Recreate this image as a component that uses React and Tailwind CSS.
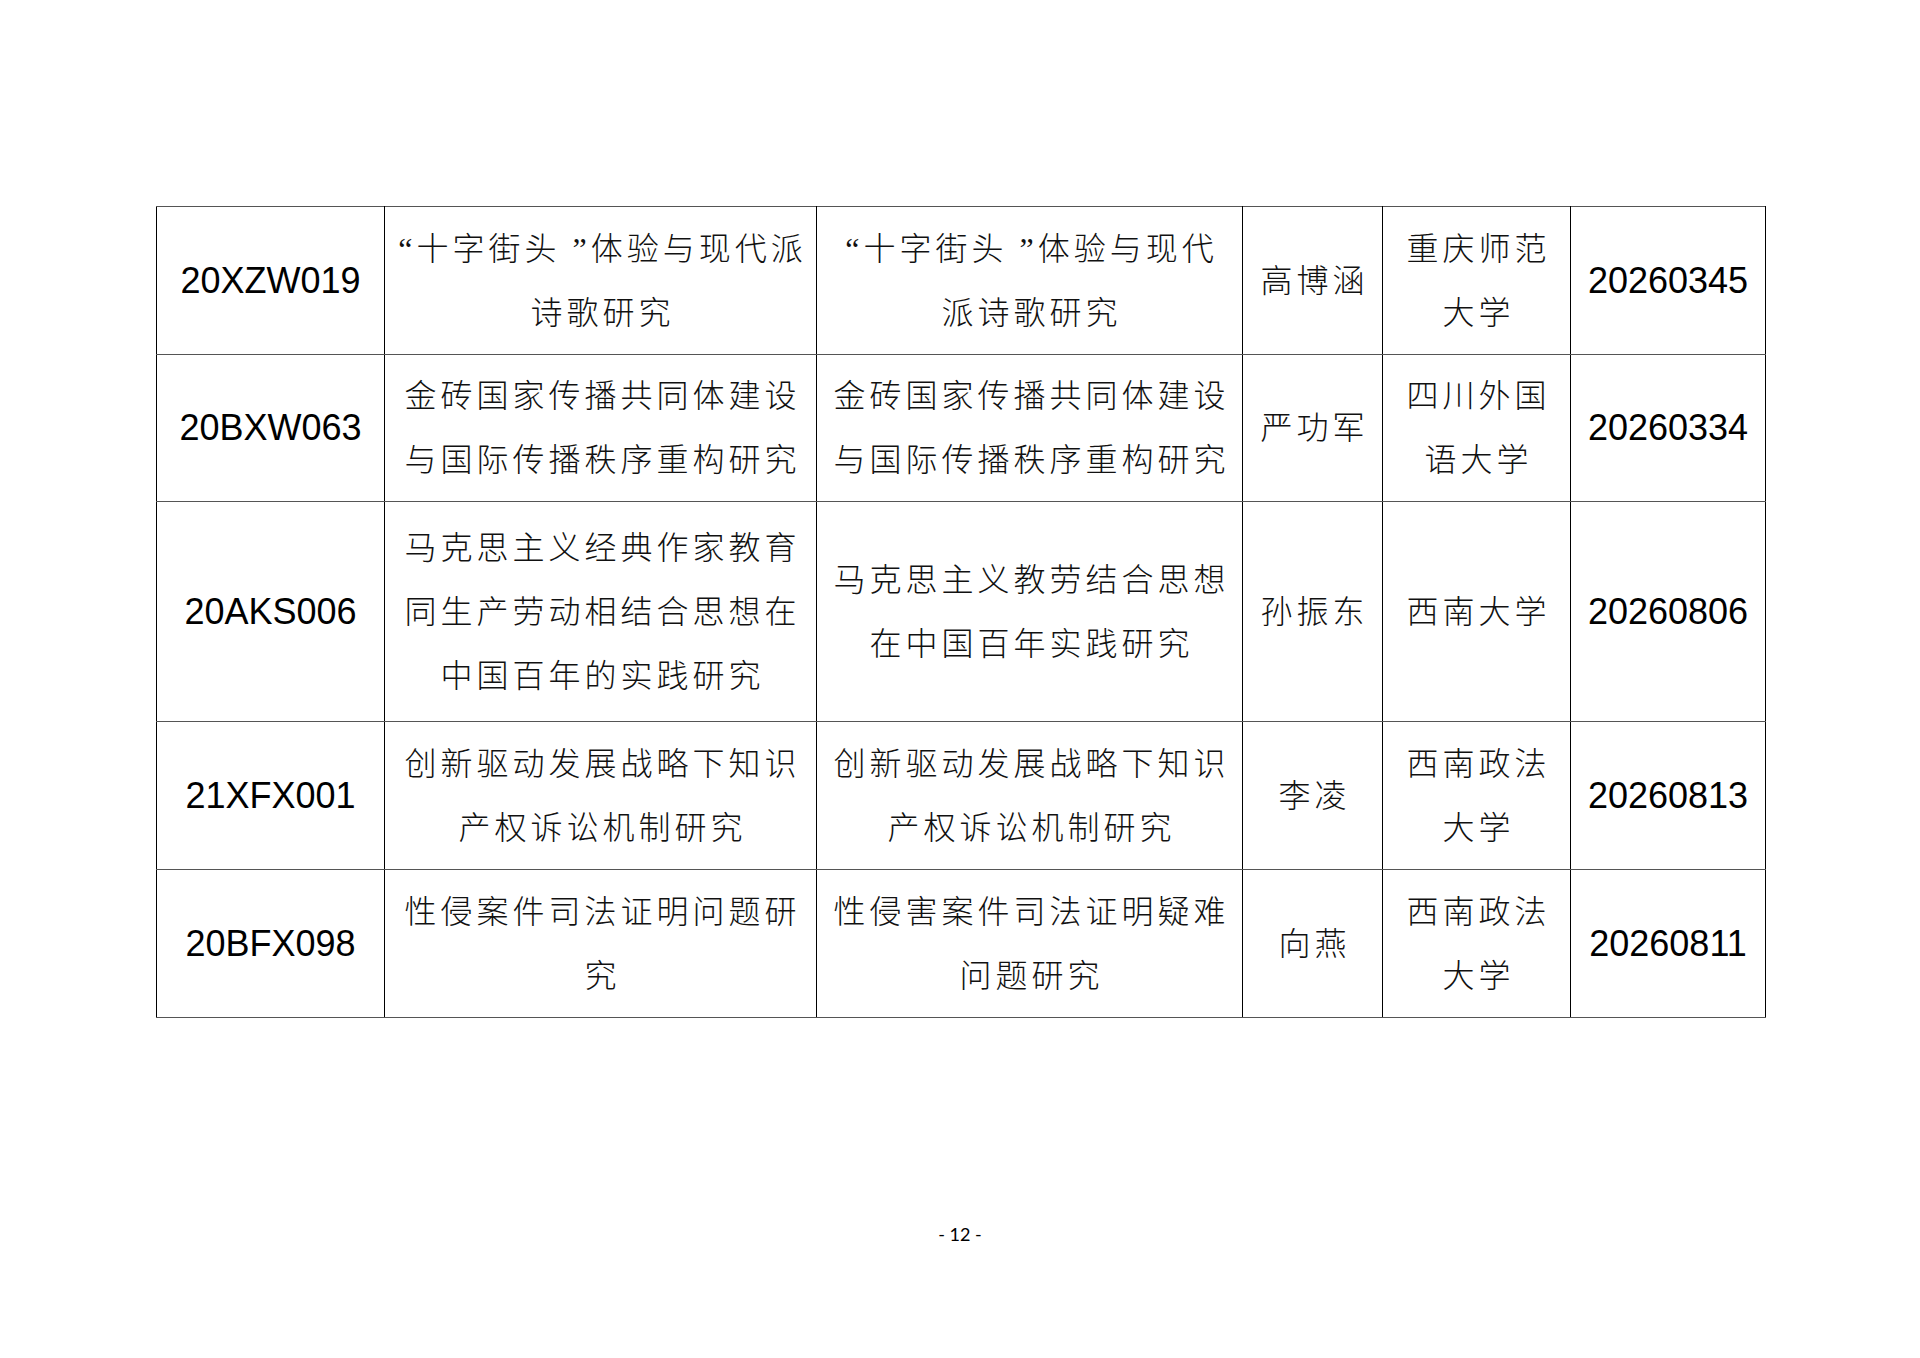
import React from "react";

const rows = [
  {
    h: "h-[148px]",
    code: "20XZW019",
    a: ["“十字街头 ”体验与现代派", "诗歌研究"],
    b: ["“十字街头 ”体验与现代", "派诗歌研究"],
    name: ["高博涵"],
    school: ["重庆师范", "大学"],
    num: "20260345",
  },
  {
    h: "h-[147px]",
    code: "20BXW063",
    a: ["金砖国家传播共同体建设", "与国际传播秩序重构研究"],
    b: ["金砖国家传播共同体建设", "与国际传播秩序重构研究"],
    name: ["严功军"],
    school: ["四川外国", "语大学"],
    num: "20260334",
  },
  {
    h: "h-[220px]",
    code: "20AKS006",
    a: ["马克思主义经典作家教育", "同生产劳动相结合思想在", "中国百年的实践研究"],
    b: ["马克思主义教劳结合思想", "在中国百年实践研究"],
    name: ["孙振东"],
    school: ["西南大学"],
    num: "20260806",
  },
  {
    h: "h-[148px]",
    code: "21XFX001",
    a: ["创新驱动发展战略下知识", "产权诉讼机制研究"],
    b: ["创新驱动发展战略下知识", "产权诉讼机制研究"],
    name: ["李凌"],
    school: ["西南政法", "大学"],
    num: "20260813",
  },
  {
    h: "h-[148px]",
    code: "20BFX098",
    a: ["性侵案件司法证明问题研", "究"],
    b: ["性侵害案件司法证明疑难", "问题研究"],
    name: ["向燕"],
    school: ["西南政法", "大学"],
    num: "20260811",
  },
];

const cellBase =
  "border-x border-x-black border-y border-y-[#555] p-0 align-middle text-center";

const cjk =
  "font-['Liberation_Serif','Noto_Sans_CJK_SC',serif] text-[32px] leading-[64px] tracking-[4px] pl-[4px] font-light text-[#111] whitespace-nowrap";

const latin =
  "font-['Liberation_Sans',Arial,sans-serif] text-[36px] leading-[40px] text-black whitespace-nowrap";

function Lines({ lines }) {
  return (
    <div className="flex flex-col items-center">
      {lines.map((l, i) => (
        <div key={i} className={cjk}>
          {l}
        </div>
      ))}
    </div>
  );
}

export default function App() {
  return (
    <div className="w-[1920px] h-[1358px] bg-white flex flex-col pt-[206px] pl-[156px]">
      <table className="table-fixed border-collapse w-[1609px]">
        <colgroup>
          <col className="w-[228px]" />
          <col className="w-[432px]" />
          <col className="w-[426px]" />
          <col className="w-[140px]" />
          <col className="w-[188px]" />
          <col className="w-[195px]" />
        </colgroup>
        <tbody>
          {rows.map((r) => (
            <tr key={r.code} className={r.h}>
              <td className={cellBase}>
                <span className={latin}>{r.code}</span>
              </td>
              <td className={cellBase}>
                <Lines lines={r.a} />
              </td>
              <td className={cellBase}>
                <Lines lines={r.b} />
              </td>
              <td className={cellBase}>
                <Lines lines={r.name} />
              </td>
              <td className={cellBase}>
                <Lines lines={r.school} />
              </td>
              <td className={cellBase}>
                <span className={latin}>{r.num}</span>
              </td>
            </tr>
          ))}
        </tbody>
      </table>
      <div className="mt-[204px] -ml-[156px] w-[1920px] text-center font-['Lato','Liberation_Sans',sans-serif] text-[18px] leading-[24px] text-black">
        - 12 -
      </div>
    </div>
  );
}
